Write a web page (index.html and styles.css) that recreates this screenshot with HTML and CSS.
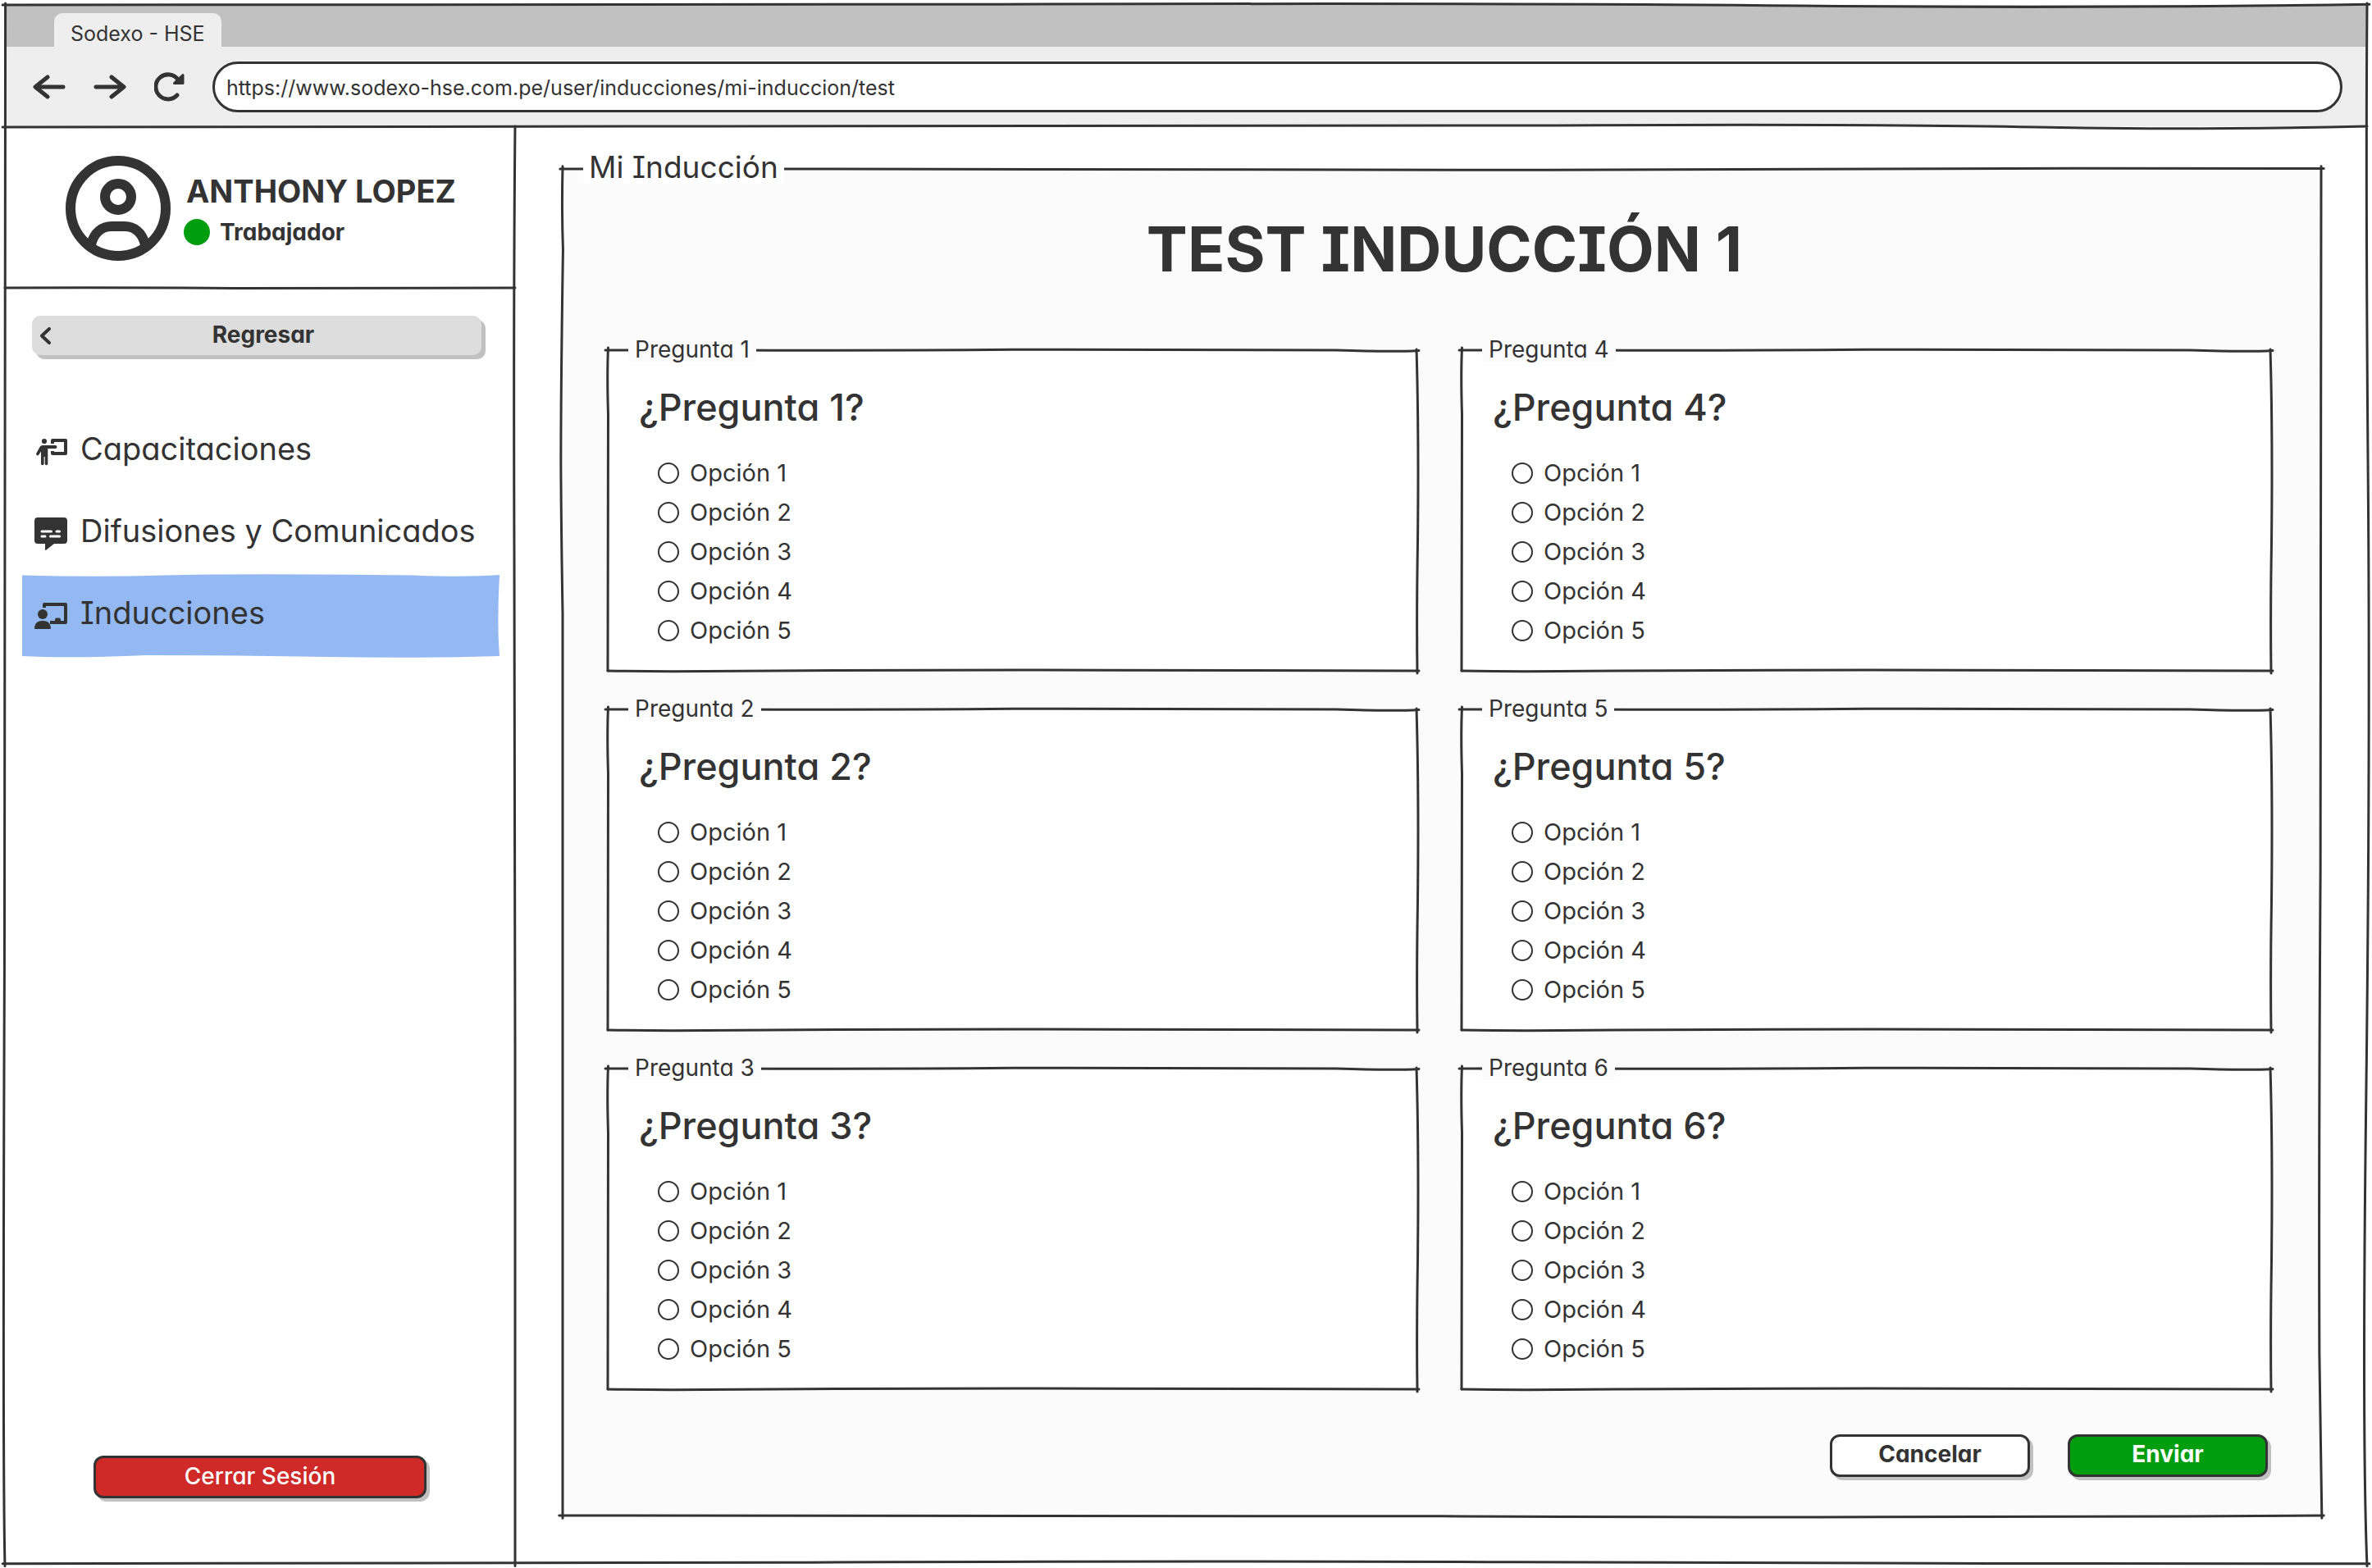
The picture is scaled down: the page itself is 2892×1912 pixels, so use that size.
FILE: index.html
```html
<!DOCTYPE html>
<html lang="es">
<head>
<meta charset="utf-8">
<meta name="viewport" content="width=device-width, initial-scale=1">
<title>Sodexo - HSE</title>
<link rel="stylesheet" href="styles.css">
</head>
<body>

<svg class="defs" width="0" height="0" aria-hidden="true">
  <symbol id="window-frame" viewBox="0 0 1000 1000" preserveAspectRatio="none">
    <path d="M-1 0Q200 .6 420 -.4T760 .5T1001 -.4"/>
    <path d="M.2 -1Q.6 300 -.2 620T0 1002"/>
    <path d="M1000 -1Q999.4 120 1000.4 300T999.6 700T1000 1002"/>
    <path d="M-1 1000.4Q160 1000.8 330 999.6T640 999.4T840 1000.2L1001 1000.4"/>
  </symbol>
  <symbol id="panel-frame" viewBox="0 0 1000 1000" preserveAspectRatio="none">
    <path d="M-1.500 0H130Q300 1 560 .8T860 -.4L1001.500 -.3"/>
    <path d="M0 -2Q-.6 30 .2 60Q-1 160 -1 220Q-.8 270 0 330V1002"/>
    <path d="M1000 -2Q1000.600 300 999.600 520T999 880L1000.400 1002"/>
    <path d="M-2 1000Q250 999 500 1000.500T1001.500 1000"/>
  </symbol>
  <symbol id="card-frame" viewBox="0 0 1000 400" preserveAspectRatio="none">
    <path d="M-3 0H150Q330 .6 500 -.8Q700 -1 900 0Q970 2.500 1002 .5"/>
    <path d="M.5 -3Q-1 30 .5 80Q0 220 0 400"/>
    <path d="M999 -1Q1002 100 1000.500 240Q999 330 1000 403"/>
    <path d="M0 400Q60 401 120 400.500Q400 398.500 620 399.200L1002 400"/>
  </symbol>
  <symbol id="rule" viewBox="0 0 1000 10" preserveAspectRatio="none">
    <path d="M-1 6Q120 4 300 5T640 4T860 6T1000 5"/>
  </symbol>
  <symbol id="rule-flat" viewBox="0 0 1000 10" preserveAspectRatio="none">
    <path d="M0 5Q250 4.500 450 5.500L1000 5"/>
  </symbol>
  <symbol id="side-rule" viewBox="0 0 10 1000" preserveAspectRatio="none">
    <path d="M5 0Q3 120 4 300T5 640V1002"/>
  </symbol>
  <symbol id="marker" viewBox="0 0 1000 100" preserveAspectRatio="none">
    <path d="M0 .5Q150 3 300 .5T820 .5Q930 3 1000 0Q996 40 998 80L1000 99Q820 102 640 100T260 98Q100 102 0 99Z"/>
  </symbol>
</svg>

<div class="window">
  <header class="chrome">
    <div class="tabs"><span class="tab">Sodexo - HSE</span></div>
    <div class="toolbar">
      <button class="tool" type="button" aria-label="Atrás">
        <svg width="40" height="30" viewBox="0 0 40 30"><path d="M37 15H4M18 3 3 15l15 12"/></svg>
      </button>
      <button class="tool" type="button" aria-label="Adelante">
        <svg width="40" height="30" viewBox="0 0 40 30"><path d="M3 15H36M22 3l15 12-15 12"/></svg>
      </button>
      <button class="tool" type="button" aria-label="Recargar">
        <svg width="37" height="36" viewBox="0 0 37 36"><path d="M28 28A15 15 0 1 1 29 9"/><path class="head" d="M35 3.500V13.500H24.500L29 9Z"/></svg>
      </button>
      <input class="url" type="text" aria-label="Dirección" value="https://www.sodexo-hse.com.pe/user/inducciones/mi-induccion/test">
    </div>
    <svg class="sketch line-bottom" aria-hidden="true"><use href="#rule"/></svg>
  </header>

  <div class="layout">
    <aside class="sidebar">
      <section class="profile">
        <svg class="avatar" width="128" height="128" viewBox="0 0 128 128" aria-hidden="true">
          <circle cx="64" cy="64" r="58"/>
          <circle cx="64" cy="50" r="16"/>
          <path d="M31 108C35 93 45 86 56 86H72C83 86 93 93 97 108"/>
        </svg>
        <div class="who">
          <div class="name">ANTHONY LOPEZ</div>
          <div class="role"><span class="status"></span>Trabajador</div>
        </div>
        <svg class="sketch line-bottom" aria-hidden="true"><use href="#rule-flat"/></svg>
      </section>

      <button class="back" type="button">
        <svg width="13" height="21" viewBox="0 0 13 21" aria-hidden="true"><path d="M11 2 2 10.500 11 19"/></svg>
        <span>Regresar</span>
      </button>

      <nav class="menu">
        <a href="#capacitaciones">
          <svg class="icon" width="40" height="40" viewBox="0 0 40 40" aria-hidden="true">
            <circle cx="12" cy="7" r="3.100"/>
            <path d="M10 12H25.500a2 2 0 0 1 0 4H16.300V34.500a1.800 1.800 0 0 1-3.600 0V26H11.600V34.500a1.800 1.800 0 0 1-3.600 0V19.500L5.300 23.500a1.700 1.700 0 0 1-3-1.800L6.500 14Q7.700 12 10 12Z"/>
            <path class="stroke" d="M22 10V6H38V22H22V19"/>
          </svg>
          <span>Capacitaciones</span>
        </a>
        <a href="#difusiones">
          <svg class="icon" width="40" height="40" viewBox="0 0 40 40" aria-hidden="true">
            <path d="M4 0H36a4 4 0 0 1 4 4V28a4 4 0 0 1-4 4H24L14.500 39.500Q13 40.500 13 39V32H4a4 4 0 0 1-4-4V4A4 4 0 0 1 4 0Z"/>
            <path class="dash" d="M9 17H20.500M27 17H30.500M9 23H13M19.500 23H30.500"/>
          </svg>
          <span>Difusiones y Comunicados</span>
        </a>
        <a class="current" href="#inducciones" aria-current="page">
          <svg class="fill" aria-hidden="true"><use href="#marker"/></svg>
          <svg class="icon" width="40" height="40" viewBox="0 0 40 40" aria-hidden="true">
            <path class="stroke" d="M12 10V6H38V28H19"/>
            <path d="M25 28V24.500a2 2 0 0 1 2-2H30a2 2 0 0 1 2 2V28Z"/>
            <circle cx="10" cy="18" r="6"/>
            <path d="M1 36Q0 36 0 34.500Q1 26 9 26H11Q19 26 20 34.500Q20 36 19 36Z"/>
          </svg>
          <span>Inducciones</span>
        </a>
      </nav>

      <button class="btn logout" type="button">Cerrar Sesión</button>
      <svg class="sketch line-right" aria-hidden="true"><use href="#side-rule"/></svg>
    </aside>

    <main class="content">
      <form>
        <fieldset class="panel">
          <svg class="sketch" aria-hidden="true"><use href="#panel-frame"/></svg>
          <legend>Mi Inducción</legend>
          <h1>TEST INDUCCIÓN 1</h1>

          <div class="cards">
            <fieldset class="card">
              <svg class="sketch" aria-hidden="true"><use href="#card-frame"/></svg>
              <legend>Pregunta 1</legend>
              <h2>¿Pregunta 1?</h2>
              <div class="options">
                <label><input type="radio" name="p1">Opción 1</label>
                <label><input type="radio" name="p1">Opción 2</label>
                <label><input type="radio" name="p1">Opción 3</label>
                <label><input type="radio" name="p1">Opción 4</label>
                <label><input type="radio" name="p1">Opción 5</label>
              </div>
            </fieldset>
            <fieldset class="card">
              <svg class="sketch" aria-hidden="true"><use href="#card-frame"/></svg>
              <legend>Pregunta 2</legend>
              <h2>¿Pregunta 2?</h2>
              <div class="options">
                <label><input type="radio" name="p2">Opción 1</label>
                <label><input type="radio" name="p2">Opción 2</label>
                <label><input type="radio" name="p2">Opción 3</label>
                <label><input type="radio" name="p2">Opción 4</label>
                <label><input type="radio" name="p2">Opción 5</label>
              </div>
            </fieldset>
            <fieldset class="card">
              <svg class="sketch" aria-hidden="true"><use href="#card-frame"/></svg>
              <legend>Pregunta 3</legend>
              <h2>¿Pregunta 3?</h2>
              <div class="options">
                <label><input type="radio" name="p3">Opción 1</label>
                <label><input type="radio" name="p3">Opción 2</label>
                <label><input type="radio" name="p3">Opción 3</label>
                <label><input type="radio" name="p3">Opción 4</label>
                <label><input type="radio" name="p3">Opción 5</label>
              </div>
            </fieldset>
            <fieldset class="card">
              <svg class="sketch" aria-hidden="true"><use href="#card-frame"/></svg>
              <legend>Pregunta 4</legend>
              <h2>¿Pregunta 4?</h2>
              <div class="options">
                <label><input type="radio" name="p4">Opción 1</label>
                <label><input type="radio" name="p4">Opción 2</label>
                <label><input type="radio" name="p4">Opción 3</label>
                <label><input type="radio" name="p4">Opción 4</label>
                <label><input type="radio" name="p4">Opción 5</label>
              </div>
            </fieldset>
            <fieldset class="card">
              <svg class="sketch" aria-hidden="true"><use href="#card-frame"/></svg>
              <legend>Pregunta 5</legend>
              <h2>¿Pregunta 5?</h2>
              <div class="options">
                <label><input type="radio" name="p5">Opción 1</label>
                <label><input type="radio" name="p5">Opción 2</label>
                <label><input type="radio" name="p5">Opción 3</label>
                <label><input type="radio" name="p5">Opción 4</label>
                <label><input type="radio" name="p5">Opción 5</label>
              </div>
            </fieldset>
            <fieldset class="card">
              <svg class="sketch" aria-hidden="true"><use href="#card-frame"/></svg>
              <legend>Pregunta 6</legend>
              <h2>¿Pregunta 6?</h2>
              <div class="options">
                <label><input type="radio" name="p6">Opción 1</label>
                <label><input type="radio" name="p6">Opción 2</label>
                <label><input type="radio" name="p6">Opción 3</label>
                <label><input type="radio" name="p6">Opción 4</label>
                <label><input type="radio" name="p6">Opción 5</label>
              </div>
            </fieldset>
          </div>

          <div class="actions">
            <button class="btn cancel" type="button">Cancelar</button>
            <button class="btn send" type="submit">Enviar</button>
          </div>
        </fieldset>
      </form>
    </main>
  </div>
  <svg class="sketch" aria-hidden="true"><use href="#window-frame"/></svg>
</div>

</body>
</html>
```
FILE: styles.css
```css
:root {
  --ink: #333;
  --paper: #fbfbfb;
  --shadow: #c1c1c1;
  --green: #009e0f;
}

* { box-sizing: border-box; }

body {
  margin: 0;
  padding: 6px;
  background: #fff;
  color: var(--ink);
  font: 400 28px/48px Inter, "Liberation Sans", sans-serif;
  /* single-storey a, serifed capital I */
  font-feature-settings: "cv11", "cv08";
}

button, input { font: inherit; font-feature-settings: inherit; color: inherit; }
button { cursor: pointer; }
svg { display: block; flex: none; }
.defs { position: absolute; }

/* hand-drawn outlines laid over the boxes they belong to */
.sketch {
  position: absolute;
  inset: 0;
  width: 100%;
  height: 100%;
  overflow: visible;
  pointer-events: none;
  fill: none;
  stroke: var(--ink);
  stroke-width: 3px;
  stroke-linecap: round;
}
.sketch.line-bottom { inset: auto 0 -5px 0; height: 10px; }
.sketch.line-right { inset: 0 -5px 0 auto; width: 10px; }
symbol { overflow: visible; }
symbol path { vector-effect: non-scaling-stroke; }

.window {
  position: relative;
  display: flex;
  flex-direction: column;
  min-height: calc(100vh - 12px);
}

/* browser chrome */
.chrome { position: relative; background: #eee; }
.tabs {
  display: flex;
  align-items: flex-end;
  height: 51px;
  padding-left: 60px;
  background: #c1c1c1;
}
.tab {
  height: 41px;
  padding: 5px 20px 0;
  border-radius: 10px 10px 0 0;
  background: #eee;
  font-size: 25px;
  line-height: 41px;
}
.toolbar {
  display: flex;
  align-items: center;
  gap: 34px;
  padding: 18px 30px 17px 34px;
}
.tool { padding: 0; border: 0; background: none; }
.tool svg {
  fill: none;
  stroke: var(--ink);
  stroke-width: 5px;
  stroke-linecap: round;
  stroke-linejoin: round;
}
.tool .head { fill: var(--ink); stroke-width: 3px; }
.url {
  flex: 1;
  min-width: 0;
  height: 62px;
  padding: 2px 14px 0;
  border: 3px solid var(--ink);
  border-radius: 31px;
  background: #fff;
  font-size: 25px;
}

.layout { display: flex; flex: 1; }

/* sidebar */
.sidebar {
  position: relative;
  display: flex;
  flex-direction: column;
  flex: none;
  width: 622px;
}
.profile {
  position: relative;
  display: flex;
  gap: 16px;
  padding: 36px 0 33px 74px;
}
.avatar { fill: none; stroke: var(--ink); stroke-width: 12px; }
.who { padding-top: 18px; line-height: 50px; font-weight: 700; }
.name { padding-left: 3px; font-size: 38px; }
.role { display: flex; align-items: center; gap: 12px; }
.status { width: 32px; height: 32px; border-radius: 50%; background: var(--green); }

.back {
  display: flex;
  align-items: center;
  height: 48px;
  margin: 34px 41px 0 33px;
  padding: 0 7px 0 10px;
  border: 0;
  border-radius: 10px;
  background: #ddd;
  box-shadow: 5px 5px 0 var(--shadow);
  font-weight: 700;
  line-height: 46px;
}
.back span { flex: 1; padding-bottom: 2px; }
.back svg { fill: none; stroke: var(--ink); stroke-width: 4px; stroke-linecap: round; stroke-linejoin: round; }

.menu { margin: 68px 19px 0 21px; }
.menu a {
  position: relative;
  display: flex;
  align-items: center;
  gap: 16px;
  height: 100px;
  padding-left: 15px;
  color: inherit;
  text-decoration: none;
  font-size: 38px;
}
.menu span { position: relative; padding-bottom: 8px; }
.icon { position: relative; fill: var(--ink); }
.icon .stroke { fill: none; stroke: var(--ink); stroke-width: 4px; stroke-linejoin: round; }
.icon .dash { fill: none; stroke: #fff; stroke-width: 3px; stroke-linecap: round; }
.fill {
  position: absolute;
  inset: 0;
  width: 100%;
  height: 100%;
  overflow: visible;
  fill: #94b9f2;
}

/* buttons */
.btn {
  width: 244px;
  height: 52px;
  padding: 0 0 4px;
  border: 3px solid var(--ink);
  border-radius: 12px;
  box-shadow: 4px 4px 0 var(--shadow);
  font-weight: 700;
  line-height: 42px;
}
.cancel { background: #fff; }
.send { background: var(--green); color: #fff; }
.logout {
  align-self: center;
  width: 406px;
  margin: auto 0 79px;
  padding-bottom: 2px;
  background: #cf2a27;
  color: #fff;
  font-weight: 500;
}

/* test */
.content { flex: 1; min-width: 0; padding: 52px 56px 58px 58px; }
fieldset { position: relative; min-width: 0; margin: 0; border: 0; }
legend { position: absolute; left: 25px; }
h1, h2 { margin: 0; }

.panel { padding: 50px 61px 47px 55px; background: var(--paper); }
.panel > legend {
  top: -22px;
  padding: 0 7px;
  background: #fff;
  font-size: 37px;
  line-height: 40px;
}
h1 {
  margin-bottom: 75px;
  padding-left: 12px;
  font-size: 75px;
  line-height: 96px;
  text-align: center;
}

.cards {
  display: grid;
  grid-template-rows: repeat(3, auto);
  grid-auto-flow: column;
  grid-auto-columns: 1fr;
  gap: 47px 54px;
}
.card { padding: 42px 38px 25px; background: #fff; }
.card > legend {
  top: -16px;
  padding: 0 8px;
  background: var(--paper);
  line-height: 30px;
}
h2 { margin-bottom: 28px; font-size: 45px; font-weight: 500; line-height: 56px; }
.options {
  display: flex;
  flex-direction: column;
  padding-left: 23px;
  font-size: 29px;
}
.options label { display: flex; align-items: center; align-self: flex-start; gap: 13px; }
.options input {
  appearance: none;
  width: 26px;
  height: 26px;
  margin: 0;
  border: 2px solid var(--ink);
  border-radius: 50%;
  background: #fff;
}
.options input:checked { box-shadow: inset 0 0 0 5px #fff; background: var(--ink); }

.actions {
  display: flex;
  justify-content: flex-end;
  gap: 46px;
  margin-top: 55px;
  padding-right: 4px;
}
```
